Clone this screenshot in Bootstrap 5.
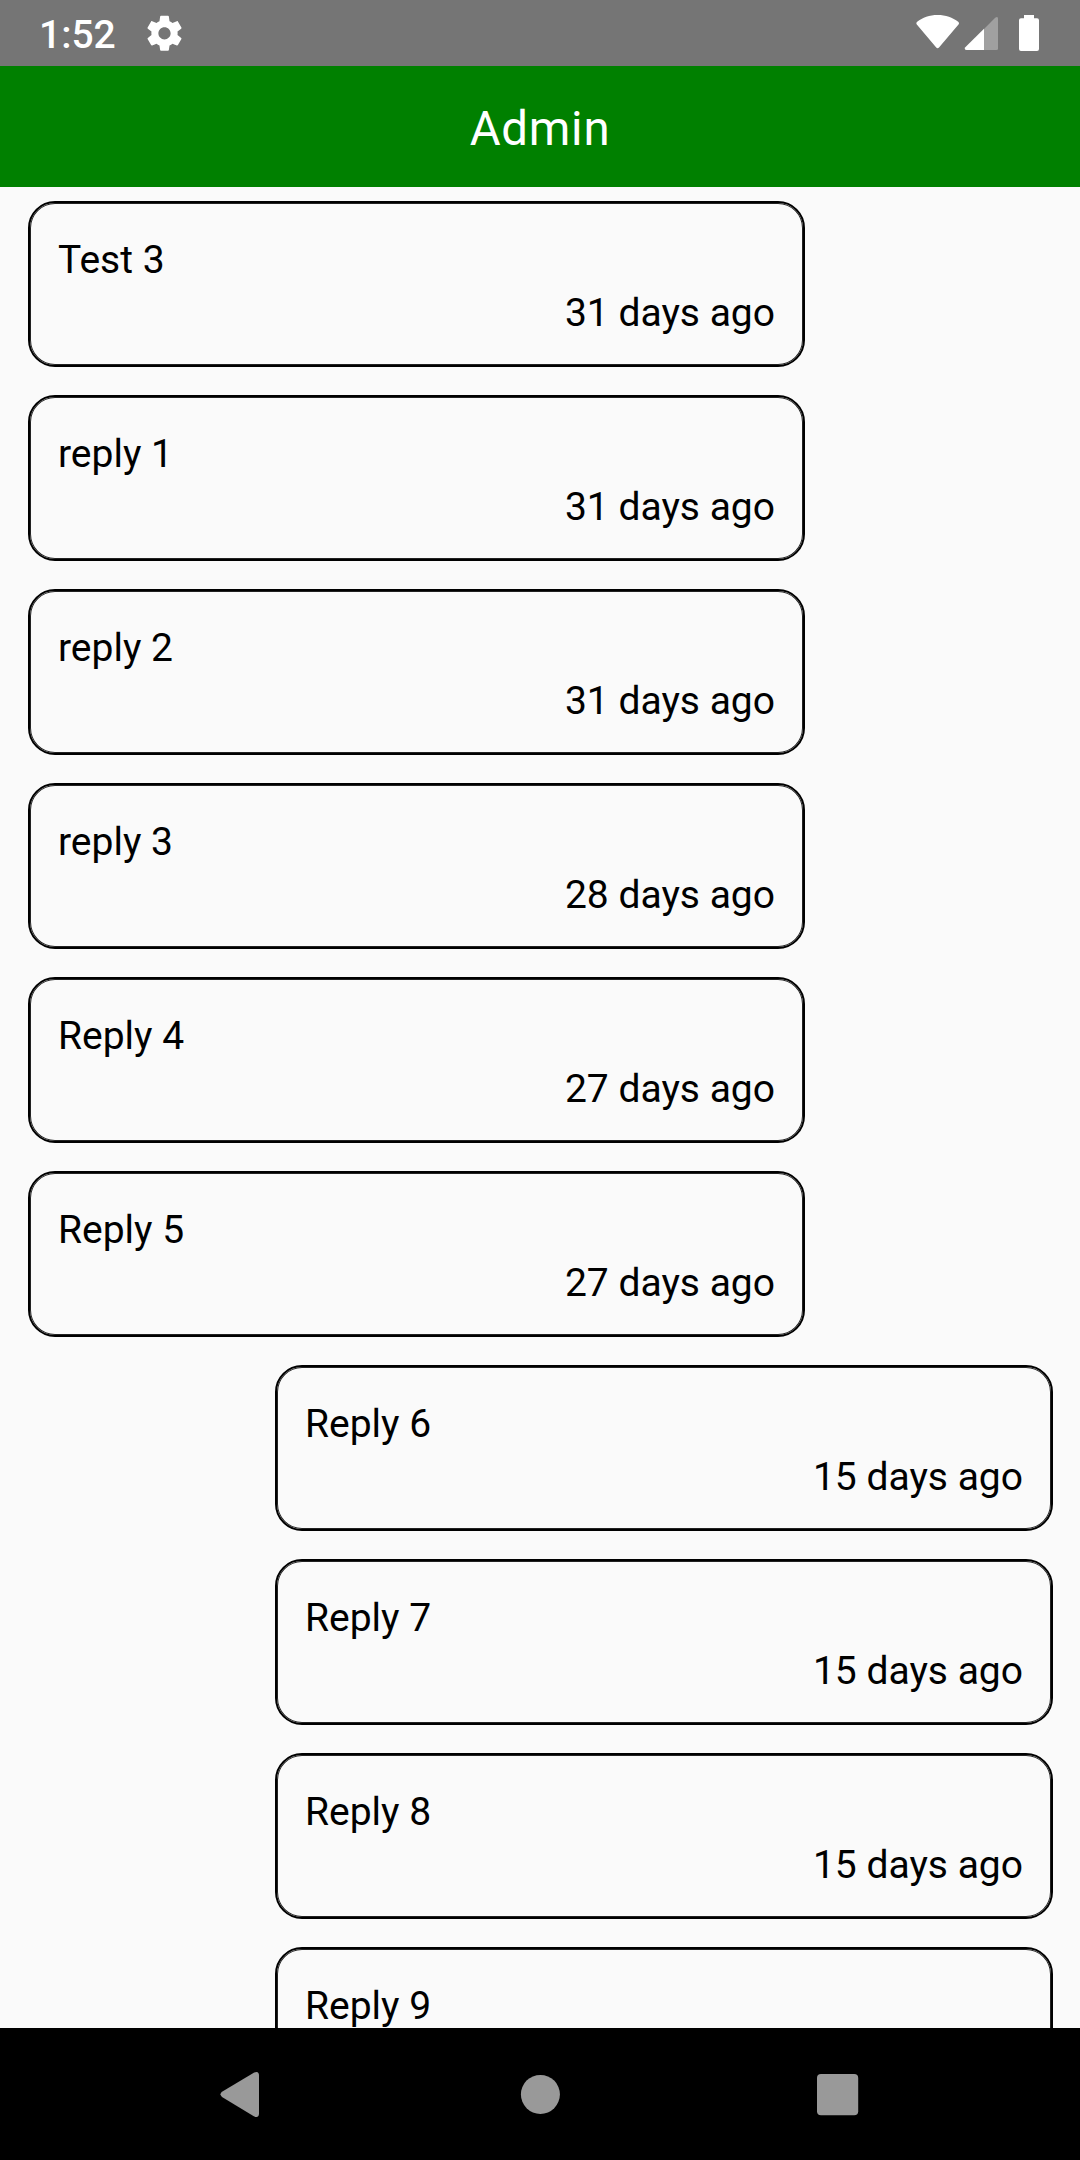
<!DOCTYPE html>
<html lang="en">
<head>
<meta charset="utf-8">
<meta name="viewport" content="width=device-width, initial-scale=1">
<title>Admin</title>
<link href="https://cdn.jsdelivr.net/npm/bootstrap@5.3.0/dist/css/bootstrap.min.css" rel="stylesheet">
<style>
  body { font-family: Roboto, "Liberation Sans", sans-serif; font-size: 39px; line-height: 53px; color: #000; background: #fafafa; }
  .screen { height: 2160px; }
  .status-strip { height: 66px; background: #757575; padding: 0 41px 0 39px; }
  .clock { font-weight: 500; line-height: 66px; padding-top: 2px; width: 105px; }
  .app-header { height: 121px; background: #008000; }
  .app-title { font-size: 47.4px; font-weight: 400; letter-spacing: .75px; line-height: 116px; padding-top: 5px; }
  .thread { padding: 14px 27px 0 28px; gap: 28px; }
  .bubble { width: 777px; height: 166px; border: 2px solid #000; border-radius: 27px; box-shadow: inset 0 0 0 1px #222; padding: 31px 28px 0 28px; }
  .bubble.mine { width: 778px; }
  .system-nav { height: 132px; }
</style>
<script src="https://cdn.jsdelivr.net/npm/bootstrap@5.3.0/dist/js/bootstrap.bundle.min.js"></script>
</head>
<body>
<div class="screen d-flex flex-column overflow-hidden">
  <div class="status-strip d-flex flex-shrink-0 text-white overflow-hidden">
    <div class="clock">1:52</div>
    <svg width="42" height="66" viewBox="144 0 42 66" fill="#fff" aria-hidden="true"><path transform="translate(143.5 12.3) scale(1.75)" d="M19.43 12.98c.04-.32.07-.64.07-.98s-.03-.66-.07-.98l2.11-1.65c.19-.15.24-.42.12-.64l-2-3.46c-.12-.22-.39-.3-.61-.22l-2.49 1c-.52-.4-1.08-.73-1.69-.98l-.38-2.65C14.46 2.18 14.25 2 14 2h-4c-.25 0-.46.18-.49.42l-.38 2.65c-.61.25-1.17.59-1.69.98l-2.49-1c-.23-.09-.49 0-.61.22l-2 3.46c-.13.22-.07.49.12.64l2.11 1.65c-.04.32-.07.65-.07.98s.03.66.07.98l-2.11 1.65c-.19.15-.24.42-.12.64l2 3.46c.12.22.39.3.61.22l2.49-1c.52.4 1.08.73 1.69.98l.38 2.65c.03.24.24.42.49.42h4c.25 0 .46-.18.49-.42l.38-2.65c.61-.25 1.17-.59 1.69-.98l2.49 1c.23.09.49 0 .61-.22l2-3.46c.12-.22.07-.49-.12-.64l-2.11-1.65zM12 15.5c-1.93 0-3.5-1.57-3.5-3.5s1.57-3.5 3.5-3.5 3.5 1.57 3.5 3.5-1.57 3.5-3.5 3.5z"/></svg>
    <svg class="ms-auto" width="44" height="66" viewBox="916 0 44 66" fill="#fff" aria-hidden="true"><path d="M917.2 21.8C922.500 17.600 929.500 15 937.600 15s15.100 2.600 20.600 6.800q1.400 1.200.3 2.800L939.200 47.300q-1.600 2-3.200 0L916.800 24.600q-1.100-1.600.4-2.800z"/></svg>
    <svg width="40" height="66" viewBox="960 0 40 66" aria-hidden="true"><path fill="#a0a0a0" d="M984 29l11.200-11.300q2.800-1.900 2.800 1V48.500q0 1.500-1.500 1.500H984z"/><path fill="#fff" d="M984 28.700V50h-17.500q-2.800-.5-1.200-2.800z"/></svg>
    <svg width="39" height="66" viewBox="1000 0 39 66" fill="#fff" aria-hidden="true"><path d="M1024 15h10v3.300h3q2 0 2 2V49q0 2-2 2h-16q-2 0-2-2V20.300q0-2 2-2h3z"/></svg>
  </div>

  <header class="app-header flex-shrink-0 text-center text-white">
    <h1 class="app-title m-0">Admin</h1>
  </header>

  <main class="thread d-flex flex-column flex-grow-1 overflow-hidden">
    <div class="bubble flex-shrink-0"><div>Test 3</div><div class="text-end">31 days ago</div></div>
    <div class="bubble flex-shrink-0"><div>reply 1</div><div class="text-end">31 days ago</div></div>
    <div class="bubble flex-shrink-0"><div>reply 2</div><div class="text-end">31 days ago</div></div>
    <div class="bubble flex-shrink-0"><div>reply 3</div><div class="text-end">28 days ago</div></div>
    <div class="bubble flex-shrink-0"><div>Reply 4</div><div class="text-end">27 days ago</div></div>
    <div class="bubble flex-shrink-0"><div>Reply 5</div><div class="text-end">27 days ago</div></div>
    <div class="bubble mine flex-shrink-0 align-self-end"><div>Reply 6</div><div class="text-end">15 days ago</div></div>
    <div class="bubble mine flex-shrink-0 align-self-end"><div>Reply 7</div><div class="text-end">15 days ago</div></div>
    <div class="bubble mine flex-shrink-0 align-self-end"><div>Reply 8</div><div class="text-end">15 days ago</div></div>
    <div class="bubble mine flex-shrink-0 align-self-end"><div>Reply 9</div></div>
  </main>

  <nav class="system-nav d-flex flex-shrink-0 justify-content-center bg-black">
    <svg width="298" height="132" viewBox="93 0 298 132" fill="#999" aria-hidden="true"><path d="M222 63.700L253.800 44.700q5.200-2.300 5.200 2.800V85.500q0 5-5.200 2.800L222 69q-3-2.700 0-5.300z"/></svg>
    <svg width="298" height="132" viewBox="391 0 298 132" fill="#999" aria-hidden="true"><circle cx="540.4" cy="66.4" r="19.5"/></svg>
    <svg width="298" height="132" viewBox="689 0 298 132" fill="#999" aria-hidden="true"><rect x="817" y="46" width="41.200" height="41.300" rx="4"/></svg>
  </nav>
</div>
</body>
</html>
